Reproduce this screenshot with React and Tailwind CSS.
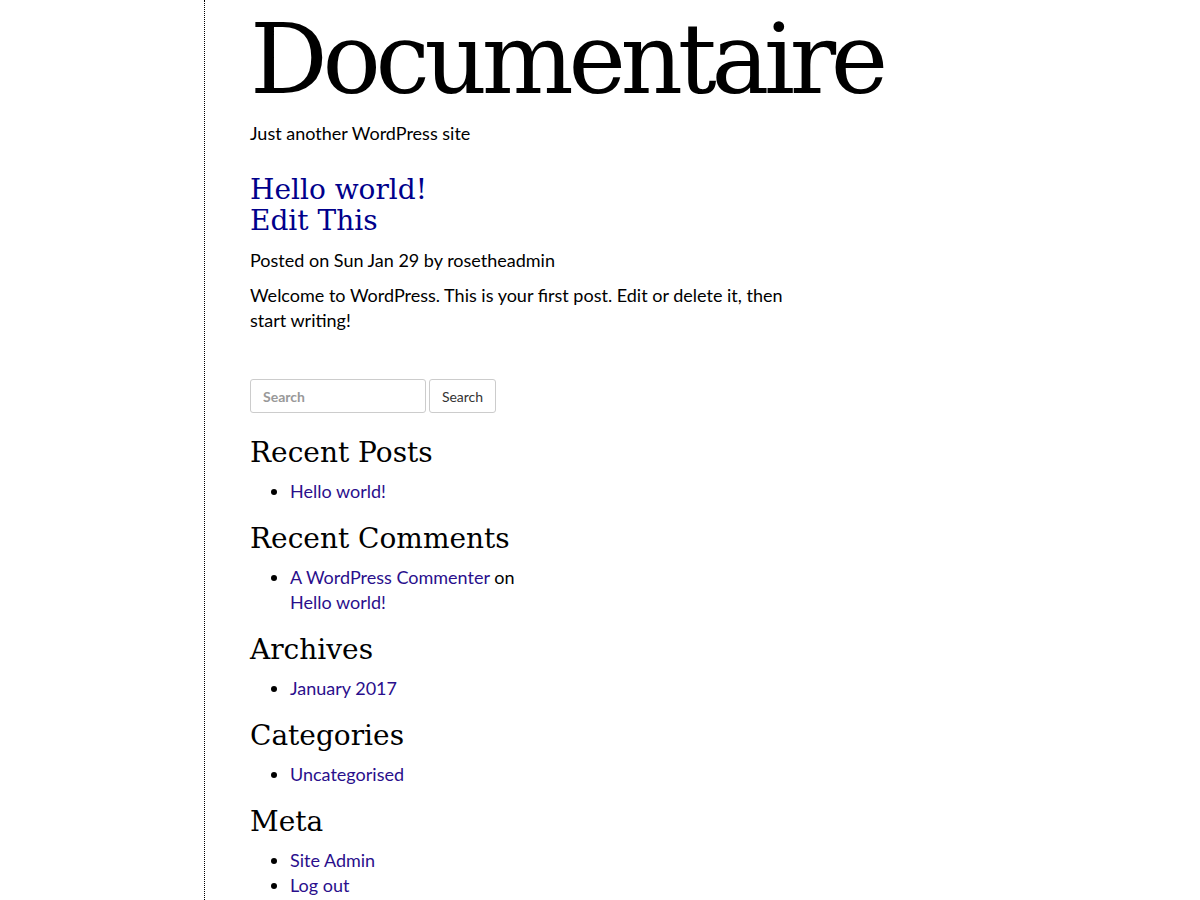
const serif = { fontFamily: '"DejaVu Serif", "Liberation Serif", serif' };

const widgets = [
  { title: "Recent Posts", items: [[{ text: "Hello world!", link: true }]] },
  {
    title: "Recent Comments",
    items: [
      [
        { text: "A WordPress Commenter", link: true },
        { text: " on " },
        { text: "Hello world!", link: true },
      ],
    ],
  },
  { title: "Archives", items: [[{ text: "January 2017", link: true }]] },
  { title: "Categories", items: [[{ text: "Uncategorised", link: true }]] },
  {
    title: "Meta",
    items: [[{ text: "Site Admin", link: true }], [{ text: "Log out", link: true }]],
  },
];

function Widget({ title, items }) {
  return (
    <section className="mt-[17px] first:mt-0">
      <h2 className="text-[28px] leading-[36px] text-black" style={serif}>
        {title}
      </h2>
      <ul className="mt-[8px] list-disc pl-[40px] w-[300px]">
        {items.map((parts, i) => (
          <li key={i}>
            {parts.map((p, j) =>
              p.link ? (
                <a key={j} href="#" className="text-[#2a0f8c]">
                  {p.text}
                </a>
              ) : (
                <span key={j}>{p.text}</span>
              ),
            )}
          </li>
        ))}
      </ul>
    </section>
  );
}

export default function App() {
  return (
    <div
      className="min-h-screen bg-white text-black text-[18px] leading-[25px]"
      style={{ fontFamily: 'Lato, "Open Sans", sans-serif' }}
    >
      <div className="ml-[204px] min-h-screen border-l border-dotted border-black pl-[45px] w-[600px]">
        {/* Site header */}
        <header>
          <h1
            className="text-[97px] leading-[120px] tracking-[-5.3px] whitespace-nowrap"
            style={serif}
          >
            Documentaire
          </h1>
          <p className="mt-[1px]">Just another WordPress site</p>
        </header>

        {/* Post */}
        <article className="mt-[28px]">
          <h2 className="text-[28px] leading-[31px]" style={serif}>
            <a href="#" className="block text-[#00008b]">
              Hello world!
            </a>
            <a href="#" className="block text-[#00008b]">
              Edit This
            </a>
          </h2>
          <p className="mt-[12px]">Posted on Sun Jan 29 by rosetheadmin</p>
          <p className="mt-[10px] w-[545px]">
            Welcome to WordPress. This is your first post. Edit or delete it, then start writing!
          </p>
        </article>

        {/* Sidebar */}
        <aside className="mt-[46px] pb-[20px]">
          <form className="flex gap-[3px]" onSubmit={(e) => e.preventDefault()}>
            <input
              type="text"
              placeholder="Search"
              className="w-[176px] h-[34px] rounded-[3px] border border-[#cccccc] px-[12px] text-[14px] font-bold text-[#555] placeholder:text-[#999]"
            />
            <button
              type="submit"
              className="h-[34px] w-[67px] rounded-[3px] border border-[#cccccc] bg-white text-[14px] text-[#333]"
            >
              Search
            </button>
          </form>
          <div className="mt-[22px]">
            {widgets.map((w) => (
              <Widget key={w.title} {...w} />
            ))}
          </div>
        </aside>
      </div>
    </div>
  );
}
